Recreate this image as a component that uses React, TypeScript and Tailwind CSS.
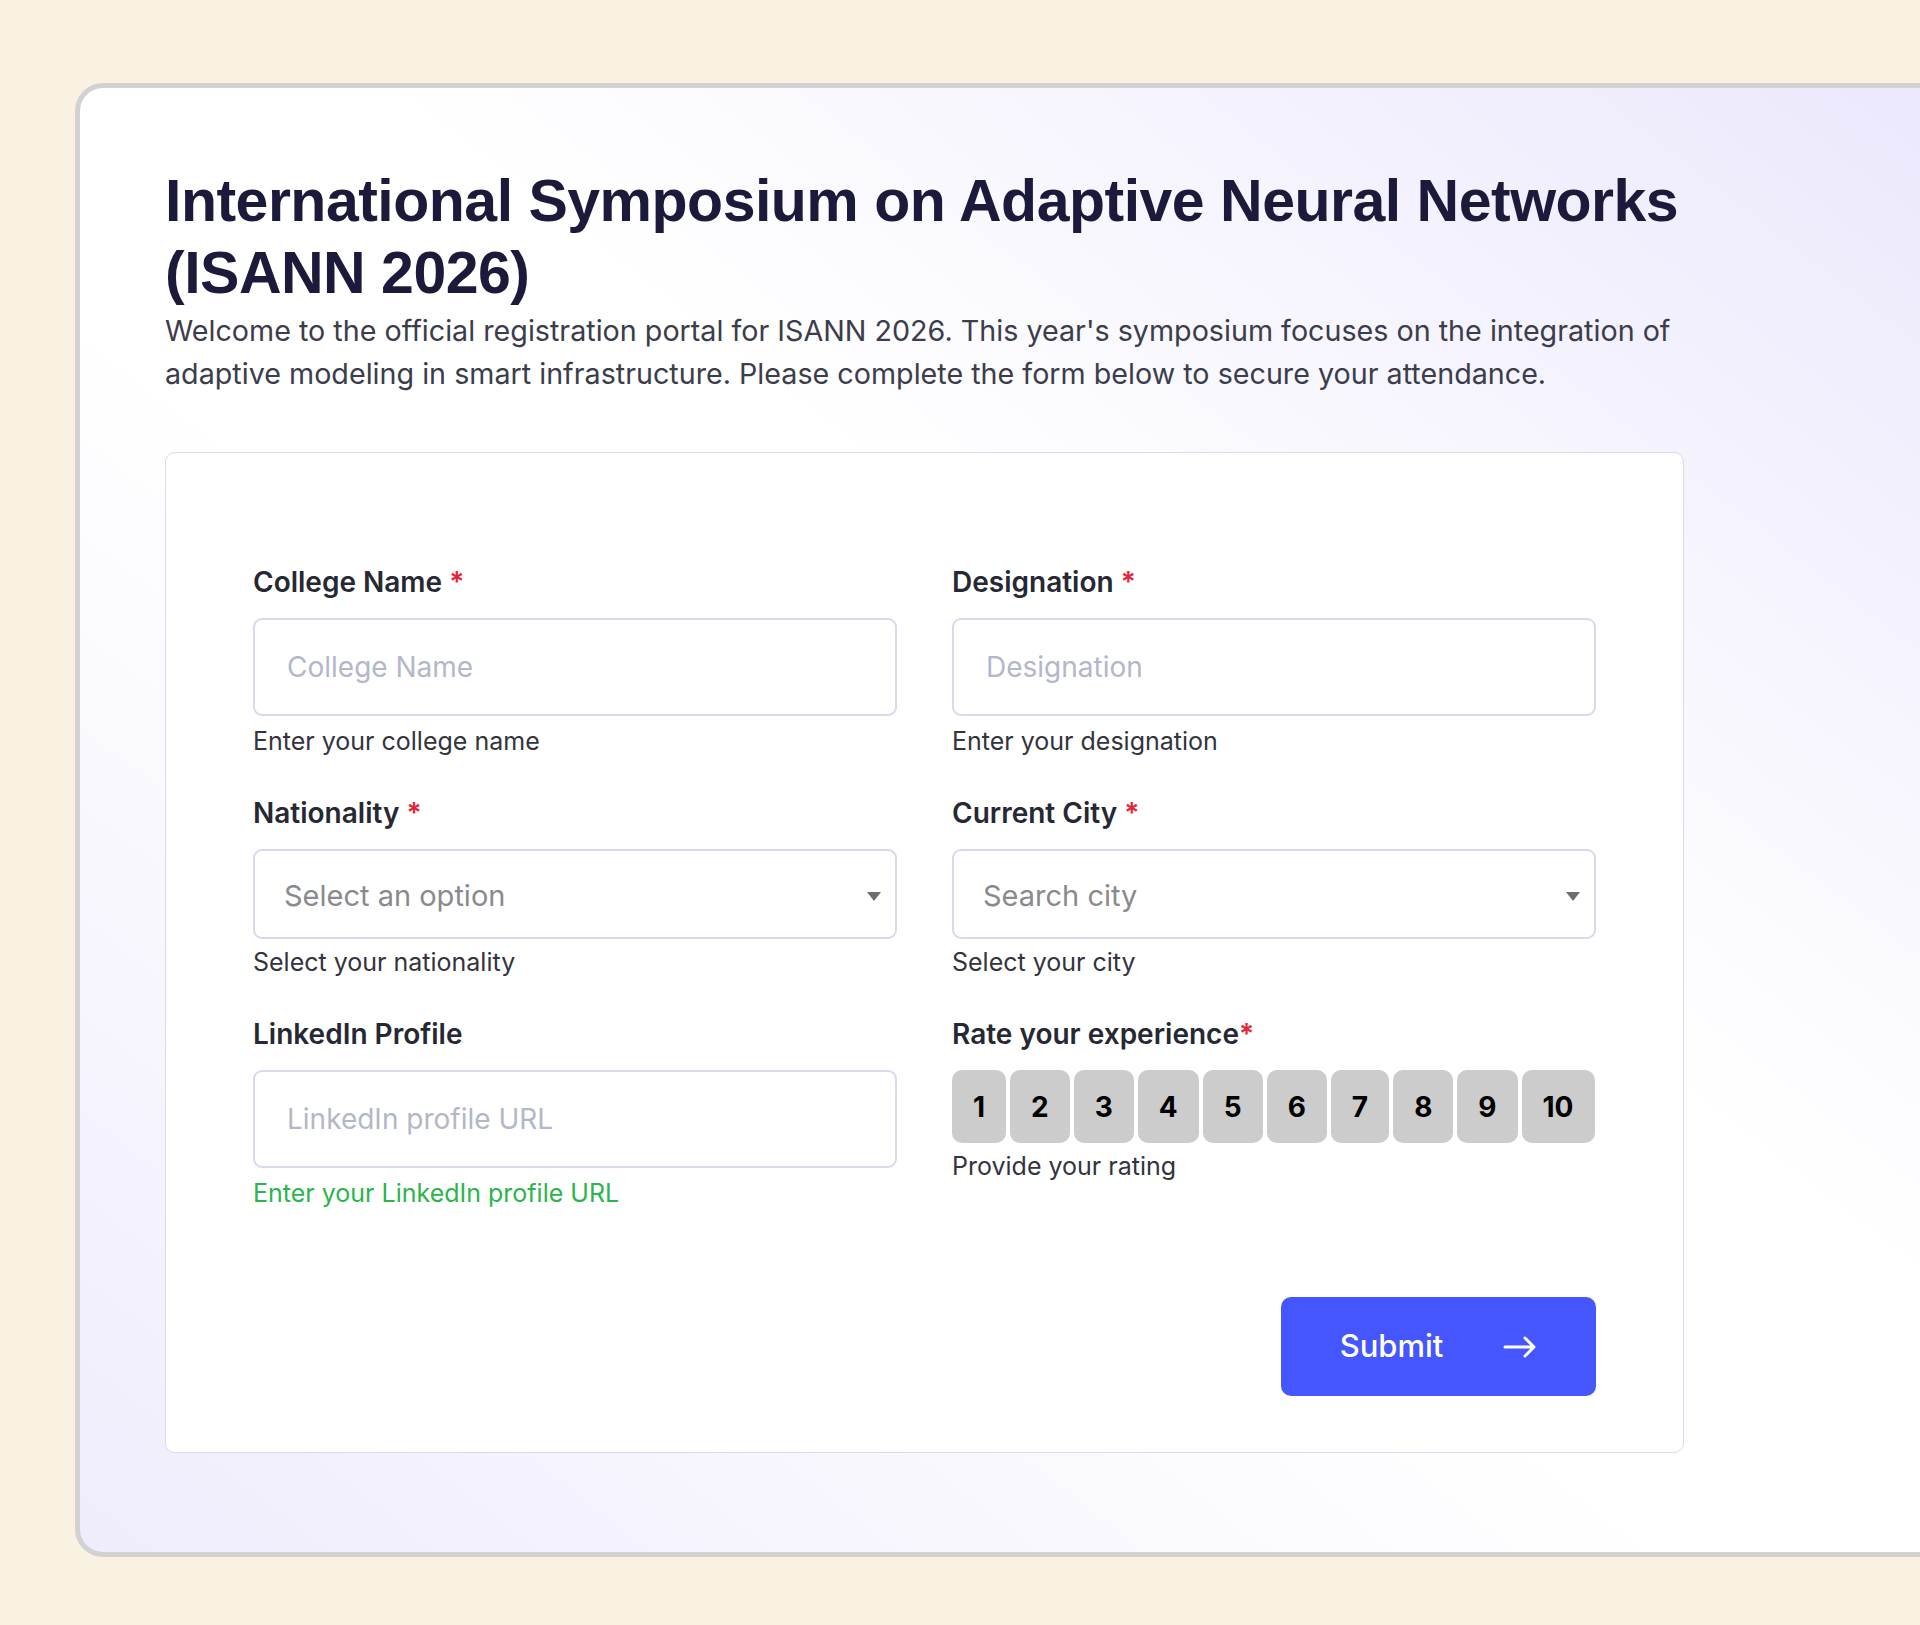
import { useState } from "react";

const body = "font-['Inter','Noto_Sans',sans-serif]";

function Label({ text, required, tight }: { text: string; required?: boolean; tight?: boolean }) {
  return (
    <label className="block text-[28px] leading-[38px] font-semibold text-[#262833]">
      {text}
      {required && <span className="text-[#e5263a]">{tight ? "*" : " *"}</span>}
    </label>
  );
}

function TextField({ label, placeholder, help, required, helpClass }: { label: string; placeholder: string; help: string; required?: boolean; helpClass?: string }) {
  return (
    <div className="flex flex-col">
      <Label text={label} required={required} />
      <input
        type="text"
        placeholder={placeholder}
        className="mt-[17px] h-[98px] w-full rounded-[9px] border-2 border-[#d6daec] bg-white px-[32px] text-[28px] text-[#262833] placeholder:text-[#b3b7cb] focus:outline-none"
      />
      <p className={"mt-[10px] text-[25px] leading-[31px] " + (helpClass ?? "text-[#33343d]")}>{help}</p>
    </div>
  );
}

function SelectField({ label, placeholder, help }: { label: string; placeholder: string; help: string }) {
  return (
    <div className="flex flex-col">
      <Label text={label} required />
      <button
        type="button"
        className="mt-[17px] flex h-[90px] w-full items-center justify-between rounded-[9px] border-2 border-[#d6daec] bg-white pl-[29px] pr-[14px] pt-[4px] text-left"
      >
        <span className="text-[29px] text-[#8a8a8e]">{placeholder}</span>
        <svg width="14" height="9" viewBox="0 0 14 9" className="text-[#6e6e6e]">
          <path d="M0 0h14L7 9z" fill="currentColor" />
        </svg>
      </button>
      <p className="mt-[8px] text-[25px] leading-[31px] text-[#33343d]">{help}</p>
    </div>
  );
}

function Rating() {
  const [value, setValue] = useState<number | null>(null);
  return (
    <div className="flex flex-col">
      <Label text="Rate your experience" required tight />
      <div className="mt-[17px] flex gap-[4px]">
        {[1, 2, 3, 4, 5, 6, 7, 8, 9, 10].map((n) => (
          <button
            key={n}
            type="button"
            onClick={() => setValue(n)}
            className={
              "h-[73px] rounded-[10px] px-[21px] text-[28px] font-bold " +
              (value === n ? "bg-[#4556ff] text-white" : "bg-[#cccccc] text-black")
            }
          >
            {n}
          </button>
        ))}
      </div>
      <p className="mt-[8px] text-[25px] leading-[31px] text-[#33343d]">Provide your rating</p>
    </div>
  );
}

export default function App() {
  return (
    <div className={"min-h-[1625px] w-full overflow-hidden bg-[#f9f2e2] pt-[83px] " + body}>
      <div className="ml-[75px] w-[1900px] rounded-[28px] border-[5px] border-[#d2d2d2] bg-[linear-gradient(to_top_right,#efecfc_0%,#ffffff_42%,#ffffff_58%,#ebe7fc_100%)] pb-[99px] pl-[85px] pt-[77px]">
        <div className="w-[1519px]">
          <h1 className="font-['Liberation_Sans','Arial',sans-serif] text-[59px] font-bold leading-[72px] tracking-[-0.5px] text-[#1b1a3a]">
            International Symposium on Adaptive Neural Networks (ISANN 2026)
          </h1>
          <p className="text-[28.7px] leading-[43px] text-[#3b3d4b]">
            Welcome to the official registration portal for ISANN 2026. This year's symposium focuses on the integration of
            adaptive modeling in smart infrastructure. Please complete the form below to secure your attendance.
          </p>

          <form
            className="mt-[57px] rounded-[10px] border border-[#d7dbeb] bg-white px-[87px] pb-[56px] pt-[110px]"
            onSubmit={(e) => e.preventDefault()}
          >
            <div className="grid grid-cols-2 gap-x-[55px] gap-y-[37px]">
              <TextField label="College Name" placeholder="College Name" help="Enter your college name" required />
              <TextField label="Designation" placeholder="Designation" help="Enter your designation" required />
              <SelectField label="Nationality" placeholder="Select an option" help="Select your nationality" />
              <SelectField label="Current City" placeholder="Search city" help="Select your city" />
              <TextField
                label="LinkedIn Profile"
                placeholder="LinkedIn profile URL"
                help="Enter your LinkedIn profile URL"
                helpClass="text-[#2bb54a]"
              />
              <Rating />
            </div>

            <div className="mt-[88px] flex justify-end">
              <button
                type="submit"
                className="flex h-[99px] w-[315px] items-center justify-center gap-[60px] rounded-[10px] bg-[#4556ff] text-[31px] font-medium text-white"
              >
                Submit
                <svg width="34" height="22" viewBox="0 0 34 22" fill="none" stroke="currentColor" strokeWidth="3" strokeLinecap="round" strokeLinejoin="round">
                  <path d="M2 11h29M22 2l9 9-9 9" />
                </svg>
              </button>
            </div>
          </form>
        </div>
      </div>
    </div>
  );
}
